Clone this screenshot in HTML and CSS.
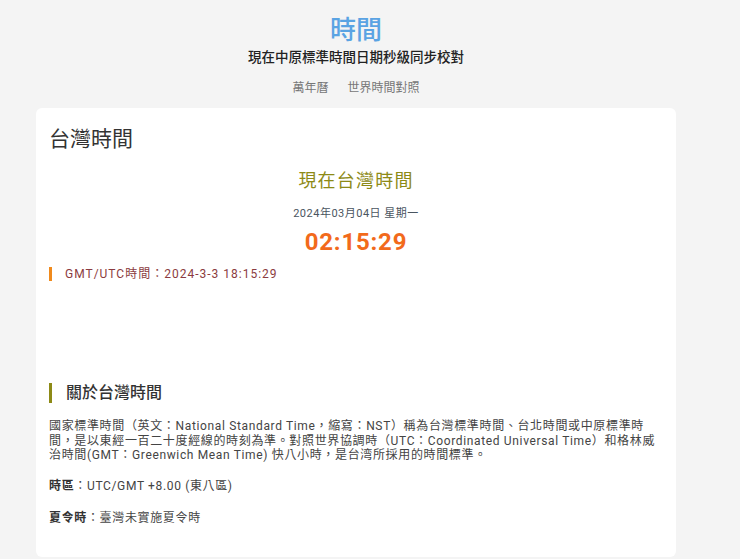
FILE: index.html
```html
<!DOCTYPE html>
<html lang="zh-Hant">
<head>
    <meta charset="UTF-8">
    <meta name="viewport" content="width=device-width, initial-scale=1.0">
    <title>時間 - 現在台灣時間</title>
    <link rel="stylesheet" href="styles.css">
</head>
<body>
    <header class="site-header">
        <h1 class="site-title">時間</h1>
        <p class="site-subtitle">現在中原標準時間日期秒級同步校對</p>
        <nav class="site-nav">
            <a href="#">萬年曆</a>
            <a href="#">世界時間對照</a>
        </nav>
    </header>

    <main class="page">
        <section class="card">
            <h2 class="card-title">台灣時間</h2>

            <div class="clock">
                <div class="clock-label">現在台灣時間</div>
                <div class="clock-date" id="clockDate">2024年03月04日 星期一</div>
                <div class="clock-time" id="clockTime">02:15:29</div>
            </div>

            <p class="utc-line" id="utcLine">GMT/UTC時間：2024-3-3 18:15:29</p>

            <h3 class="about-title">關於台灣時間</h3>
            <p class="about-text">國家標準時間（英文：National Standard Time，縮寫：NST）稱為台灣標準時間、台北時間或中原標準時間，是以東經一百二十度經線的時刻為準。對照世界協調時（UTC：Coordinated Universal Time）和格林威治時間(GMT：Greenwich Mean Time) 快八小時，是台湾所採用的時間標準。</p>
            <p class="about-text"><b>時區</b>：UTC/GMT +8.00 (東八區)</p>
            <p class="about-text dst"><b>夏令時</b>：臺灣未實施夏令時</p>
        </section>
    </main>
</body>
</html>
```

FILE: styles.css
```css
* {
    margin: 0;
    padding: 0;
    box-sizing: border-box;
}

body {
    font-family: Roboto, "Noto Sans CJK TC", sans-serif;
    background: #f4f4f4;
    color: #333;
}

.site-header {
    width: 640px;
    margin-left: 36px;
    text-align: center;
    padding-top: 13px;
}

.site-title {
    color: #5aa3e3;
    font-size: 26px;
    font-weight: 500;
    line-height: 34px;
}

.site-subtitle {
    font-size: 13.5px;
    font-weight: 500;
    color: #222;
    line-height: 20px;
}

.site-nav {
    margin-top: 12px;
    font-size: 12px;
    line-height: 18px;
}

.site-nav a {
    color: #777;
    text-decoration: none;
    margin: 0 8px;
}

.page {
    width: 640px;
    margin-left: 36px;
    margin-top: 11px;
}

.card {
    background: #fff;
    border-radius: 6px;
    padding: 16px 13px 31px;
}

.card-title {
    font-size: 21px;
    font-weight: 400;
    color: #333;
    line-height: 30px;
}

.clock {
    text-align: center;
    margin-top: 14px;
}

.clock-label {
    color: #8d8a16;
    font-size: 18px;
    letter-spacing: 1.2px;
    line-height: 26px;
}

.clock-date {
    color: #4a5560;
    font-size: 11px;
    letter-spacing: 0.5px;
    margin-top: 12px;
    line-height: 16px;
}

.clock-time {
    color: #f26a1b;
    font-size: 24px;
    font-weight: 700;
    letter-spacing: 0.8px;
    margin-top: 5px;
    line-height: 30px;
}

.utc-line {
    margin-top: 10px;
    border-left: 3px solid #f08a1c;
    padding-left: 13px;
    color: #8b3b40;
    font-size: 12px;
    letter-spacing: 1px;
    line-height: 14px;
}

.about-title {
    margin-top: 102px;
    border-left: 3px solid #8d8a16;
    padding-left: 14px;
    font-size: 16px;
    font-weight: 500;
    color: #333;
    line-height: 20px;
}

.about-text {
    margin-top: 16px;
    font-size: 12px;
    letter-spacing: 0.65px;
    line-height: 14.5px;
    color: #444;
}

.about-text.dst {
    margin-top: 18px;
}

.about-text b {
    font-weight: 700;
    color: #333;
}
```
